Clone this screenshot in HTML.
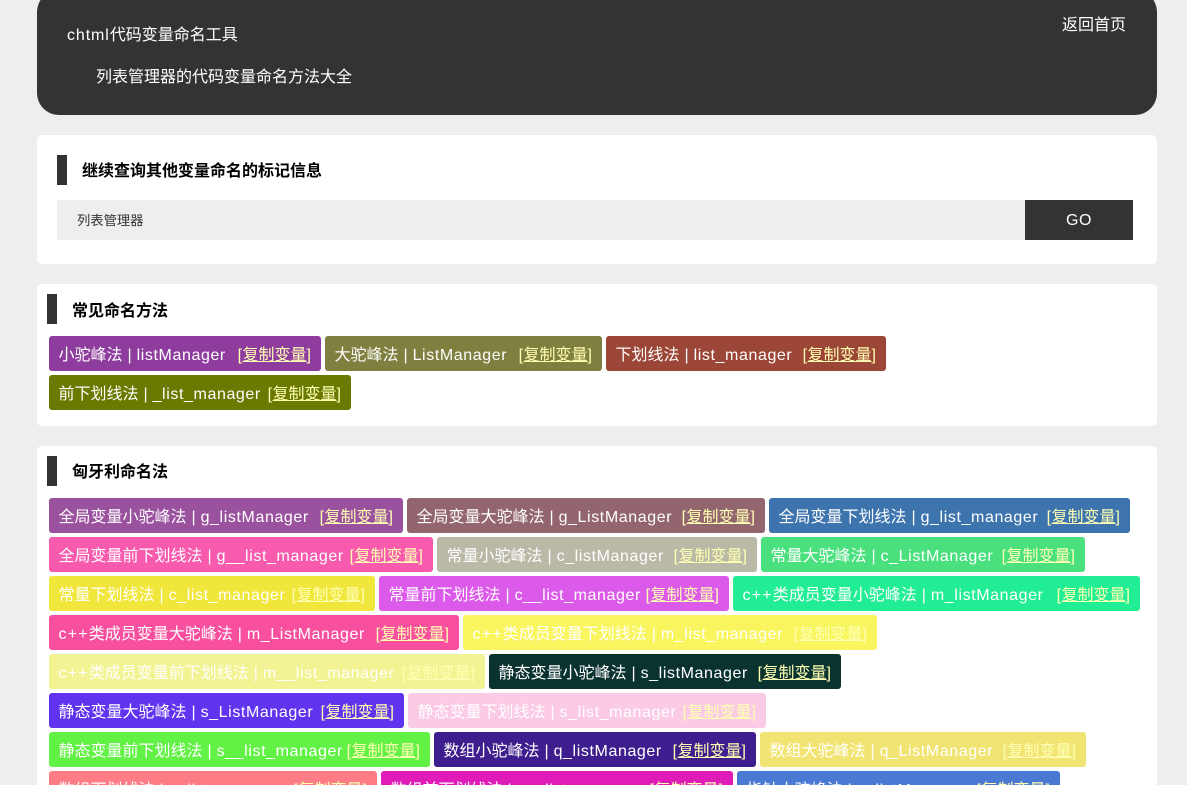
<!DOCTYPE html>
<html lang="zh">
<head>
<meta charset="utf-8">
<title>列表管理器的代码变量命名方法大全</title>
<style>
html,body{margin:0;padding:0;width:1187px;height:785px;overflow:hidden;background:#eee;font-family:"Liberation Sans","Noto Sans CJK SC",sans-serif;font-size:16px;color:#000}
#p{position:relative;width:1187px;height:785px;overflow:hidden}
.abs{position:absolute}
.hd{left:37px;top:-10px;width:1120px;height:125px;background:#333;border-radius:22px}
.w{position:absolute;color:#fff;white-space:nowrap;line-height:20px}
.card{position:absolute;left:37px;width:1120px;background:#fff;border-radius:5px}
.bar{position:absolute;width:10px;height:30px;background:#333}
.h{position:absolute;font-weight:bold;white-space:nowrap;line-height:20px}
.t{position:absolute;height:35px;line-height:35px;border-radius:3px;color:#fff;white-space:nowrap;overflow:hidden}
.t span{position:absolute;left:9.5px;top:1.5px;word-spacing:.5px}
.t b,.w b{font-weight:normal;letter-spacing:.6px}
.t s{text-decoration:none;letter-spacing:1.2px}
.t a{position:absolute;right:9.5px;top:1.5px;color:#ffffb3;text-decoration:none;letter-spacing:.5px}
.t a u{text-decoration:underline;letter-spacing:0}
</style>
</head>
<body>
<div id="p">
<div class="abs hd"></div>
<div class="w" style="left:67px;top:26px"><b style="letter-spacing:.9px">chtml</b>代码变量命名工具</div>
<div class="w" style="left:96px;top:68px">列表管理器的代码变量命名方法大全</div>
<div class="w" style="left:1062px;top:16px">返回首页</div>

<div class="card" style="top:135px;height:129px"></div>
<div class="bar" style="left:57px;top:155px"></div>
<div class="h" style="left:82px;top:162px">继续查询其他变量命名的标记信息</div>
<div class="abs" style="left:57px;top:200px;width:968px;height:40px;background:#eee"></div>
<div class="abs" style="left:77px;top:200px;line-height:41px;font-size:13.3px;color:#333">列表管理器</div>
<div class="abs" style="left:1025px;top:200px;width:108px;height:40px;line-height:41px;background:#333;color:#fff;text-align:center;letter-spacing:.5px">GO</div>

<div class="card" style="top:284px;height:142px"></div>
<div class="bar" style="left:47px;top:294px"></div>
<div class="h" style="left:72px;top:302px">常见命名方法</div>
<div class="t" style="left:49px;top:336px;width:272px;background:#8e3d9e"><span>小驼峰法 | <b>listManager</b></span><a>[<u>复制变量</u>]</a></div>
<div class="t" style="left:325px;top:336px;width:277px;background:#7f7f3f"><span>大驼峰法 | <b>ListManager</b></span><a>[<u>复制变量</u>]</a></div>
<div class="t" style="left:606px;top:336px;width:280px;background:#9b4636"><span>下划线法 | <b>list_manager</b></span><a>[<u>复制变量</u>]</a></div>
<div class="t" style="left:49px;top:375px;width:302px;background:#6a7a00"><span>前下划线法 | <b>_list_manager</b></span><a>[<u>复制变量</u>]</a></div>

<div class="card" style="top:446px;height:345px"></div>
<div class="bar" style="left:47px;top:456px"></div>
<div class="h" style="left:72px;top:463px">匈牙利命名法</div>

<div class="t" style="left:49px;top:498px;width:354px;background:#9a529f"><span>全局变量小驼峰法 | <b>g_listManager</b></span><a>[<u>复制变量</u>]</a></div>
<div class="t" style="left:407px;top:498px;width:358px;background:#92656f"><span>全局变量大驼峰法 | <b>g_ListManager</b></span><a>[<u>复制变量</u>]</a></div>
<div class="t" style="left:769px;top:498px;width:361px;background:#3d74ae"><span>全局变量下划线法 | <b>g_list_manager</b></span><a>[<u>复制变量</u>]</a></div>

<div class="t" style="left:49px;top:537px;width:384px;background:#f85aae"><span>全局变量前下划线法 | <b>g__list_manager</b></span><a>[<u>复制变量</u>]</a></div>
<div class="t" style="left:437px;top:537px;width:320px;background:#bab8a6"><span>常量小驼峰法 | <b>c_listManager</b></span><a>[<u>复制变量</u>]</a></div>
<div class="t" style="left:761px;top:537px;width:324px;background:#4be07e"><span>常量大驼峰法 | <b>c_ListManager</b></span><a>[<u>复制变量</u>]</a></div>

<div class="t" style="left:49px;top:576px;width:326px;background:#f0e63c"><span>常量下划线法 | <b>c_list_manager</b></span><a>[<u>复制变量</u>]</a></div>
<div class="t" style="left:379px;top:576px;width:350px;background:#dc5ae9"><span>常量前下划线法 | <b>c__list_manager</b></span><a>[<u>复制变量</u>]</a></div>
<div class="t" style="left:733px;top:576px;width:407px;background:#21ee94"><span><s>c++</s>类成员变量小驼峰法 | <b>m_listManager</b></span><a>[<u>复制变量</u>]</a></div>

<div class="t" style="left:49px;top:615px;width:410px;background:#f8509e"><span><s>c++</s>类成员变量大驼峰法 | <b>m_ListManager</b></span><a>[<u>复制变量</u>]</a></div>
<div class="t" style="left:463px;top:615px;width:414px;background:#f8f55f"><span><s>c++</s>类成员变量下划线法 | <b>m_list_manager</b></span><a>[<u>复制变量</u>]</a></div>

<div class="t" style="left:49px;top:654px;width:436px;background:#f2f392"><span><s>c++</s>类成员变量前下划线法 | <b>m__list_manager</b></span><a>[<u>复制变量</u>]</a></div>
<div class="t" style="left:489px;top:654px;width:352px;background:#0a3330"><span>静态变量小驼峰法 | <b>s_listManager</b></span><a>[<u>复制变量</u>]</a></div>

<div class="t" style="left:49px;top:693px;width:355px;background:#6033ee"><span>静态变量大驼峰法 | <b>s_ListManager</b></span><a>[<u>复制变量</u>]</a></div>
<div class="t" style="left:408px;top:693px;width:358px;background:#fbcbe6"><span>静态变量下划线法 | <b>s_list_manager</b></span><a>[<u>复制变量</u>]</a></div>

<div class="t" style="left:49px;top:732px;width:381px;background:#62f145"><span>静态变量前下划线法 | <b>s__list_manager</b></span><a>[<u>复制变量</u>]</a></div>
<div class="t" style="left:434px;top:732px;width:322px;background:#3e1e8e"><span>数组小驼峰法 | <b>q_listManager</b></span><a>[<u>复制变量</u>]</a></div>
<div class="t" style="left:760px;top:732px;width:326px;background:#f1e473"><span>数组大驼峰法 | <b>q_ListManager</b></span><a>[<u>复制变量</u>]</a></div>

<div class="t" style="left:49px;top:771px;width:328px;background:#fe7c85"><span>数组下划线法 | <b>q_list_manager</b></span><a>[<u>复制变量</u>]</a></div>
<div class="t" style="left:381px;top:771px;width:352px;background:#e01cb8"><span>数组前下划线法 | <b>q__list_manager</b></span><a>[<u>复制变量</u>]</a></div>
<div class="t" style="left:737px;top:771px;width:323px;background:#4a79d3"><span>指针小驼峰法 | <b>p_listManager</b></span><a>[<u>复制变量</u>]</a></div>
</div>
</body>
</html>
